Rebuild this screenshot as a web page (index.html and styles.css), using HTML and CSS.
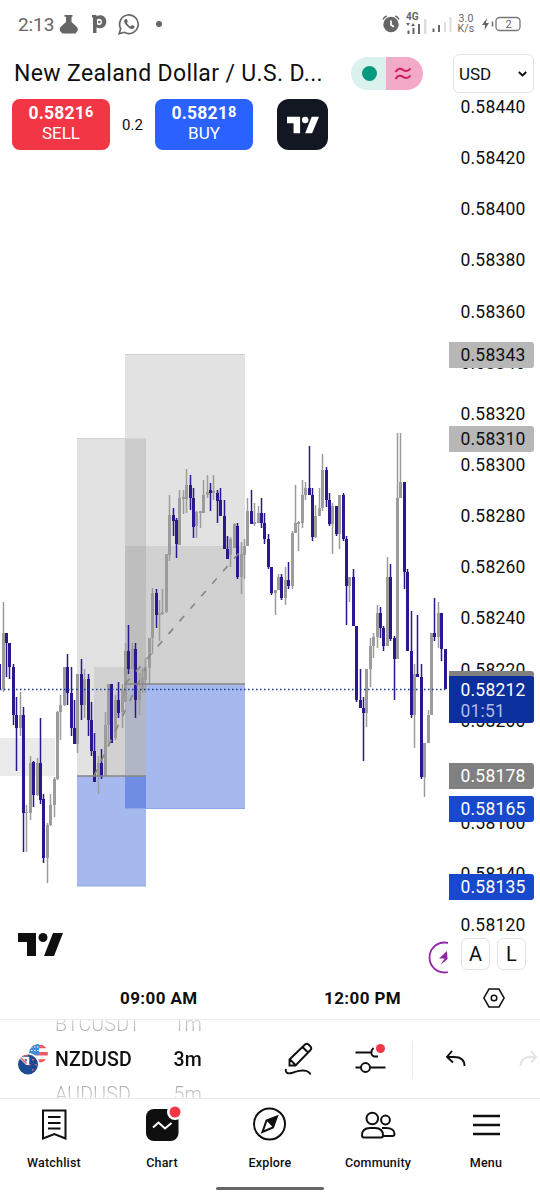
FILE: index.html
```html
<!DOCTYPE html>
<html lang="en">
<head>
    <meta charset="UTF-8">
    <meta name="viewport" content="width=device-width, initial-scale=1.0">
    <title>NZDUSD Chart</title>
    <link rel="stylesheet" href="styles.css">
</head>
<body>
    <!-- Phone status bar -->
    <div class="status-bar">
        <span class="clock">2:13</span>
        <svg class="flask" width="20" height="20" viewBox="0 0 20 20"><path d="M5.500 1h8v1.800h-1V8l5.500 5q1.500 2 .5 4l-2 2.500H3.500L1 17q-1-2 .5-4L7 8V2.800H5.500z" fill="#666"/></svg>
        <svg class="p-icon" width="15" height="20" viewBox="0 0 15 20"><path fill-rule="evenodd" d="M0 1h4.500v1.200c5-2.500 10 .3 9.800 5.800-.3 5-4.500 7.500-9.800 5.500V19H1V3.500H0zM5 5.500v5c2.500 1.500 5 .2 5-2.500s-2.500-4-5-2.500z" fill="#666"/><circle cx="7.300" cy="8" r="1.300" fill="#666"/></svg>
        <svg class="whatsapp" width="22" height="22" viewBox="0 0 22 22"><path d="M1.200 20.800l1.500-5.200a9.300 9.300 0 1 1 3.600 3.700z" fill="none" stroke="#666" stroke-width="1.700"/><path d="M7.500 6c-2 1-1.500 3.500.5 6s5 4.500 7 3.800c1.500-.6 1.800-2 1.500-2.500l-2.500-1.300-1.400 1.400c-1.600-.6-3-2-3.700-3.500l1-1.300L8.800 6z" fill="#666"/></svg>
        <span class="more-dot"></span>
        <span class="spacer"></span>
        <svg class="alarm" width="18" height="18" viewBox="0 0 18 18"><circle cx="9" cy="9.500" r="7.700" fill="#666"/><path d="M1 4.500Q2 2 4.800 1M17 4.500Q16 2 13.200 1" stroke="#666" stroke-width="1.500" fill="none"/><path d="M9 5.500V10l3 1.800" stroke="#fff" stroke-width="1.700" fill="none"/></svg>
        <div class="network">
            <span>4G</span>
            <svg width="21" height="16" viewBox="0 0 21 16"><path d="M0 5h4l-2 3zM5 8h4L7 5z" fill="#666"/><path d="M1.500 12.500h2V16h-2zM6.500 10h2v6h-2zM12 6h2v10h-2z" fill="#666"/><path d="M18 1h2.500v15H18z" fill="#ddd"/></svg>
        </div>
        <svg class="signal" width="20" height="16" viewBox="0 0 20 16"><path d="M.5 12.500h2V16h-2zM6 9h2v7H6z" fill="#666"/><path d="M12 6h2v10h-2zM17.500 1h2v15h-2z" fill="#ddd"/></svg>
        <div class="speed">3.0<br>K/s</div>
        <svg class="battery" width="40" height="16" viewBox="0 0 40 16"><path d="M5 2L0 9h3l-.5 5L7 7H4z" fill="#666"/><path d="M10.500 5.500v5" stroke="#777" stroke-width="1.600"/><rect x="14" y="1.500" width="24" height="13" rx="3.500" fill="none" stroke="#777" stroke-width="1.300"/><text x="26.500" y="12" class="battery-text">2</text></svg>
    </div>

    <div class="chart">
        <div class="pane">
            <div class="header">
                <h1>New Zealand Dollar / U.S. D...</h1>
                <div class="market">
                    <div class="open"><i></i></div>
                    <div class="delayed">
                        <svg width="18" height="14" viewBox="0 0 18 14"><path d="M1.500 5C4 .5 7 1.500 9 2.800s5 2 7.500-1.300M1.500 12C4 7.500 7 8.500 9 9.800s5 2 7.500-1.300" fill="none" stroke="#cf1c5f" stroke-width="2"/></svg>
                    </div>
                </div>
            </div>
            <div class="trade">
                <button class="sell"><b>0.5821<small>6</small></b>SELL</button>
                <span class="spread">0.2</span>
                <button class="buy"><b>0.5821<small>8</small></b>BUY</button>
                <div class="broker">
                    <svg width="32" height="18" viewBox="0 0 44 23"><path d="M0 0h18v23H9V9H0z"/><circle cx="25" cy="4.500" r="4.500"/><path d="M34 0h10l-9.500 23H25z"/></svg>
                </div>
            </div>
            <svg id="candles" class="candles" width="448" height="824" viewBox="0 152 448 824">
                <!-- closed trade on the left edge -->
                <rect class="zone-old" x="0" y="738" width="55" height="38"/>
                <!-- later position -->
                <rect class="zone-grey" x="125" y="354" width="120" height="330"/>
                <rect class="zone-mid" x="125" y="546" width="120" height="138"/>
                <rect class="zone-blue" x="125" y="684" width="120" height="125"/>
                <!-- earlier position -->
                <rect class="zone-grey" x="77" y="438" width="69" height="338"/>
                <rect class="zone-mid" x="94" y="667" width="52" height="109"/>
                <rect class="zone-blue" x="77" y="776" width="69" height="110"/>
                <rect class="zone-both" x="125" y="684" width="21" height="92"/>
                <path class="edge-grey" d="M125 354.500h120M77 438.500h69"/>
                <path class="edge-blue" d="M125 808.500h120M77 886h69"/>
                <g id="bars"></g>
                <path class="entry" d="M125 684h120M77 776h69"/>
                <path class="trend" d="M94 776L146 667M125 684L245 546"/>
                <path class="last-price" d="M0 689.500h448"/>
                <g transform="translate(18 933)" fill="#0f0f0f"><path d="M0 0h18v23H9V9H0z"/><circle cx="25" cy="4.500" r="4.500"/><path d="M35 0h10l-9 23H26z"/></g>
                <g class="flash"><circle cx="444.500" cy="957.500" r="15"/><path d="M447 951l-8 7.500h5.500l-4 6.500 7-6z"/></g>
            </svg>
        </div>

        <div class="scale">
            <div class="currency">USD
                <svg width="9" height="6" viewBox="0 0 9 6"><path d="M.8 1l3.700 3.500L8.200 1" fill="none" stroke="#0f0f0f" stroke-width="1.800"/></svg>
            </div>
            <div class="ticks">
                <span>0.58440</span>
                <span>0.58420</span>
                <span>0.58400</span>
                <span>0.58380</span>
                <span>0.58360</span>
                <span>0.58340</span>
                <span>0.58320</span>
                <span>0.58300</span>
                <span>0.58280</span>
                <span>0.58260</span>
                <span>0.58240</span>
                <span>0.58220</span>
                <span>0.58200</span>
                <span class="covered"></span>
                <span>0.58160</span>
                <span>0.58140</span>
                <span>0.58120</span>
            </div>
            <div class="tag tag-target-2">0.58343</div>
            <div class="tag tag-target-1">0.58310</div>
            <div class="tag tag-entry-2"></div>
            <div class="tag tag-last">0.58212<br><em>01:51</em></div>
            <div class="tag tag-entry-1">0.58178</div>
            <div class="tag tag-stop-2">0.58165</div>
            <div class="tag tag-stop-1">0.58135</div>
            <div class="modes"><span>A</span><span>L</span></div>
        </div>
    </div>

    <div class="time-axis">
        <span class="t1">09:00 AM</span>
        <span class="t2">12:00 PM</span>
        <svg width="22" height="20" viewBox="0 0 22 20"><path d="M6 1h10l5.200 9L16 19H6L.8 10z" fill="none" stroke="#0f0f0f" stroke-width="1.500"/><circle cx="11" cy="10" r="2.800" fill="none" stroke="#0f0f0f" stroke-width="1.500"/></svg>
    </div>

    <div class="toolbar">
        <svg class="flags" width="30" height="31" viewBox="0 0 30 31">
            <defs>
                <clipPath id="us"><circle cx="20.500" cy="9.500" r="9.500"/></clipPath>
                <clipPath id="nz"><circle cx="10" cy="20.500" r="10"/></clipPath>
            </defs>
            <g clip-path="url(#us)">
                <path d="M10 0h20v20H10z" fill="#fff"/>
                <path d="M10 2.500h20M10 9.800h20M10 17h20" stroke="#ef5b67" stroke-width="3.500"/>
                <path d="M10 0h11v11H10z" fill="#3e8be0"/>
                <path d="M10 3h11M10 6.500h11" stroke="#fff" stroke-width="1" stroke-dasharray="1.500 1.500"/>
            </g>
            <circle cx="10" cy="20.500" r="11.500" fill="#fff"/>
            <g clip-path="url(#nz)">
                <path d="M0 10h20v21H0z" fill="#1d4a94"/>
                <path d="M2 14h8v7M9 20L3 14" stroke="#fff" stroke-width="2.500" fill="none"/>
                <path d="M0 11.500h10M8.500 19.500L3 14" stroke="#e6596a" stroke-width="1.500"/>
                <path d="M14 15h1.500v1.500H14zM11 20h1.500v1.500H11zM17 20h1.500v1.500H17zM14 25h1.500v1.500H14z" fill="#ee6b78"/>
            </g>
        </svg>
        <div class="wheel symbols">
            <span>BTCUSDT</span>
            <b>NZDUSD</b>
            <span>AUDUSD</span>
        </div>
        <div class="wheel intervals">
            <span>1m</span>
            <b>3m</b>
            <span>5m</span>
        </div>
        <svg class="tool draw" width="30" height="35" viewBox="0 0 30 35"><path d="M5.500 17.500L21 2.500q1.800-1.500 3.500 0l2 2q1.500 1.700 0 3.500L11.500 23.500H5.500zM18.500 5l5.500 5.500M6 17.500l5.500 5.500M2 27c-1 4 2 5 5.500 4 4-1 7.500-3 12-2.500 4 .3 6 1.500 7 4"/></svg>
        <svg class="tool settings" width="34" height="34" viewBox="0 0 34 34"><path d="M1.500 11.500H17M19.500 7c-3.500 3-2.500 7.500.5 8.500h4M1.500 26.500h6M16 26.500h15.500"/><circle cx="11.500" cy="26.500" r="4.500"/><circle cx="26.500" cy="7.500" r="4.500" class="dot"/></svg>
        <span class="divider"></span>
        <svg class="tool undo" width="22" height="18" viewBox="0 0 22 18"><path d="M7 1L2 7l6 5.500M2 7h7c7 0 10.500 3 10.500 9"/></svg>
        <svg class="tool redo" width="22" height="18" viewBox="0 0 22 18"><path d="M13 1l5 6-5 5.500M18 7h-5C6 7 2.500 10 2.500 16"/></svg>
    </div>

    <div class="nav">
        <a>
            <svg width="36" height="36" viewBox="0 0 36 36"><path d="M7 3.500h22.500v28L18.300 27 7 31.500zM12 10h12.500M12 16h12.500M12 21.500h12.500"/></svg>
            Watchlist
        </a>
        <a>
            <svg width="36" height="36" viewBox="0 0 36 36"><rect x="2" y="2" width="32.500" height="32" rx="8" class="solid"/><path d="M9 20.500l5.500-5 6.500 6 6.500-5.500" class="light"/><circle cx="31" cy="5" r="8" class="ring"/><circle cx="31" cy="5" r="5.500" class="dot"/></svg>
            Chart
        </a>
        <a>
            <svg width="36" height="36" viewBox="0 0 36 36"><circle cx="17.500" cy="17" r="15.500"/><path d="M25 9.500l-4 11-10.500 4.500 4-11.500z"/><path d="M25 9.500l-4 11-6.500-7z" class="solid"/></svg>
            Explore
        </a>
        <a>
            <svg width="36" height="36" viewBox="0 0 36 36"><circle cx="12.300" cy="11.500" r="5.800"/><circle cx="25.500" cy="13" r="4.400"/><path d="M4 30.500q-2 0-2-2c0-5 3-7.500 8-7.500h5c5 0 8 2.500 8 7.500q0 2-2 2zM22 21h4c6 0 8.500 3 8.500 6q0 2-2 2h-9.500"/></svg>
            Community
        </a>
        <a>
            <svg width="36" height="36" viewBox="0 0 36 36"><path d="M5 9h27M5 18h27M5 27h27" class="thick"/></svg>
            Menu
        </a>
    </div>
    <div class="home-bar"></div>

    <script src="chart.js"></script>
</body>
</html>
```

FILE: styles.css
```css
body {
    margin: 0;
    width: 540px;
    height: 1200px;
    overflow: hidden;
    background: #fff;
    color: #0f0f0f;
    font-family: Roboto, sans-serif;
    display: flex;
    flex-direction: column;
}

svg {
    display: block;
    flex: none;
}

/* Status bar */
.status-bar {
    height: 48px;
    display: flex;
    align-items: center;
    color: #666;
    padding: 0 19px 0 18px;
    box-sizing: border-box;
    flex: none;
}

.clock {
    font-size: 19px;
    letter-spacing: -0.1px;
    width: 41px;
}

.p-icon {
    margin-left: 13px;
}

.whatsapp {
    margin-left: 11px;
}

.more-dot {
    width: 6px;
    height: 6px;
    border-radius: 50%;
    background: #666;
    margin-left: 16px;
}

.spacer {
    flex: 1;
}

.network {
    margin-left: 6px;
    width: 21px;
    height: 21px;
    font-size: 10px;
    font-weight: bold;
    line-height: 8px;
    display: grid;
}

.network span,
.network svg {
    grid-area: 1 / 1;
}

.network span {
    margin-top: -1px;
}

.network svg {
    margin-top: 4px;
}

.signal {
    margin-left: 5px;
}

.speed {
    font-size: 10.500px;
    line-height: 10px;
    letter-spacing: 0.2px;
    width: 20px;
    margin-left: 4px;
    text-align: center;
}

.battery {
    margin: 0 -1px 0 6px;
}

.battery-text {
    font-size: 11px;
    fill: #666;
    text-anchor: middle;
}

/* Chart */
.chart {
    display: flex;
    height: 928px;
    flex: none;
}

.pane {
    width: 448px;
    flex: none;
}

.header {
    display: flex;
    align-items: center;
    height: 51px;
    padding-left: 14px;
}

.header h1 {
    font-size: 23px;
    font-weight: normal;
    letter-spacing: 0.35px;
    line-height: 28px;
    padding-top: 1px;
    margin: 0;
    width: 337px;
    white-space: nowrap;
}

.market {
    display: flex;
    width: 72px;
    height: 33px;
    border-radius: 17px;
    overflow: hidden;
}

.open,
.delayed {
    flex: 1;
    display: flex;
    align-items: center;
    justify-content: center;
}

.open {
    background: #daf1ed;
}

.open i {
    width: 15px;
    height: 15px;
    border-radius: 50%;
    background: #089981;
    margin-left: 3px;
}

.delayed {
    background: #f3aac8;
    padding-right: 3px;
}

.trade {
    display: flex;
    align-items: center;
    padding-left: 12px;
    height: 51px;
    margin-bottom: 2px;
}

.trade button {
    width: 98px;
    height: 51px;
    border: 0;
    border-radius: 8px;
    padding: 0 0 3px;
    color: #fff;
    font: 17px/20px Roboto, sans-serif;
}

.trade b {
    display: block;
    font-size: 17.500px;
    letter-spacing: 0.2px;
}

.trade small {
    font-size: 14.500px;
    line-height: 0;
    vertical-align: 2px;
}

.sell {
    background: #f23645;
}

.trade .buy {
    background: #2962ff;
}

.spread {
    width: 45px;
    text-align: center;
    font-size: 15px;
}

.broker {
    width: 51px;
    height: 51px;
    margin-left: 24px;
    border-radius: 12px;
    background: #131722;
    display: flex;
    align-items: center;
    justify-content: center;
    fill: #fff;
}

.zone-old {
    fill: #ebebeb;
}

.zone-grey {
    fill: rgba(125, 125, 125, 0.22);
}

.zone-mid {
    fill: rgba(125, 125, 125, 0.16);
}

.zone-blue {
    fill: rgba(25, 75, 210, 0.39);
}

.zone-both {
    fill: #b0b6c6;
}

.edge-grey {
    stroke: #d3d3d3;
}

.edge-blue {
    stroke: #8fa6e6;
}

.entry {
    stroke: #868686;
    stroke-width: 1.3;
}

.trend {
    stroke: #868686;
    stroke-width: 1.6;
    stroke-dasharray: 7 9.600;
}

.last-price {
    stroke: #1a3a8f;
    stroke-width: 1.3;
    stroke-dasharray: 1.500 2.500;
}

.up {
    fill: #9c9c9c;
}

.down {
    fill: #2d178f;
}

.flash {
    fill: #9026a5;
}

.flash circle {
    fill: none;
    stroke: #9026a5;
    stroke-width: 1.800;
}

/* Price scale */
.scale {
    width: 92px;
    position: relative;
    font-size: 17.500px;
    letter-spacing: 0.2px;
}

.currency {
    box-sizing: border-box;
    width: 81px;
    height: 39px;
    margin: 6px 0 0 5px;
    padding: 0 6px 0 5px;
    border: 1.500px solid #e4e4e4;
    border-radius: 6px;
    display: flex;
    align-items: center;
    justify-content: space-between;
    font-size: 17px;
    letter-spacing: 0;
}

.ticks {
    margin-top: -11px;
    padding-left: 12.500px;
}

.ticks span {
    display: block;
    height: 51.150px;
    line-height: 51.150px;
}

.tag {
    position: absolute;
    left: 0.500px;
    box-sizing: border-box;
    width: 85px;
    height: 26px;
    line-height: 27px;
    padding-left: 12px;
    border-radius: 0 3px 3px 0;
    color: #fff;
}

.tag-target-2,
.tag-target-1 {
    background: #b7b7b7;
    color: #0f0f0f;
}

.tag-target-2 { top: 294px; }
.tag-target-1 { top: 378px; }

.tag-entry-2,
.tag-entry-1 {
    background: #808080;
}

.tag-entry-2 { top: 623px; }
.tag-entry-1 { top: 715px; }

.tag-last {
    top: 628px;
    height: 47px;
    padding-top: 4px;
    line-height: 21px;
    background: #0b2f9c;
}

.tag-last em {
    font-style: normal;
    color: #aebce8;
}

.tag-stop-2,
.tag-stop-1 {
    background: #1848cc;
}

.tag-stop-2 { top: 748px; }
.tag-stop-1 { top: 826px; }

.modes {
    display: flex;
    gap: 7px;
    padding-left: 13px;
    margin-top: -13.500px;
    position: relative;
}

.modes span {
    box-sizing: border-box;
    width: 29px;
    height: 32px;
    line-height: 30px;
    text-align: center;
    background: #fff;
    border: 1px solid #e2e2e2;
    border-radius: 6px;
    font-size: 20px;
}

/* Time axis */
.time-axis {
    height: 43px;
    flex: none;
    display: flex;
    align-items: center;
    font-size: 17px;
    font-weight: bold;
    letter-spacing: 0.4px;
}

.time-axis span {
    padding-top: 1px;
}

.t1 {
    margin-left: 120px;
    width: 204px;
}

.t2 {
    width: 159px;
}

/* Toolbar */
.toolbar {
    height: 80px;
    flex: none;
    box-sizing: border-box;
    border-top: 1.500px solid #ebebeb;
    border-bottom: 1.500px solid #ebebeb;
    display: flex;
    align-items: center;
    padding-left: 18px;
    overflow: hidden;
}

.wheel {
    height: 78px;
    display: flex;
    flex-direction: column;
    justify-content: center;
    overflow: hidden;
    -webkit-mask-image: linear-gradient(rgba(0, 0, 0, 0.3), #000 35%, #000 65%, rgba(0, 0, 0, 0.3));
    mask-image: linear-gradient(rgba(0, 0, 0, 0.3), #000 35%, #000 65%, rgba(0, 0, 0, 0.3));
}

.wheel span,
.wheel b {
    flex: none;
    height: 35px;
    line-height: 35px;
    font-size: 19.500px;
    font-weight: 500;
    letter-spacing: 0.2px;
}

.wheel span {
    color: #777;
    font-weight: 300;
}

.symbols {
    margin-left: 7px;
    width: 119px;
}

.tool {
    fill: none;
    stroke: #0f0f0f;
    stroke-width: 1.900;
}

.dot {
    fill: #f23645;
    stroke: none;
}

.intervals {
    width: 111px;
}

.settings {
    margin-left: 40px;
    margin-top: -3px;
}

.divider {
    width: 1px;
    height: 37px;
    background: #ebebeb;
    margin-left: 24px;
}

.undo {
    margin-left: 32px;
}

.redo {
    margin-left: 51px;
    stroke: #e3e3e3;
}

/* Bottom navigation */
.nav {
    display: flex;
    height: 87px;
    flex: none;
}

.nav a {
    width: 108px;
    display: flex;
    flex-direction: column;
    align-items: center;
    padding-top: 8px;
    gap: 11.500px;
    font-size: 12.500px;
    font-weight: 500;
    line-height: 15px;
    letter-spacing: 0.2px;
}

.nav svg {
    overflow: visible;
    fill: none;
    stroke: #0f0f0f;
    stroke-width: 2;
}

.nav .solid {
    fill: #0f0f0f;
    stroke: none;
}

.nav .light {
    stroke: #fff;
}

.nav .ring {
    fill: #fff;
    stroke: none;
}

.nav .dot {
    fill: #f23645;
    stroke: none;
}

.nav .thick {
    stroke-width: 2.600;
}

.home-bar {
    width: 108px;
    height: 3px;
    border-radius: 2px;
    background: #666;
    margin: 1px auto 0;
}
```

FILE: chart.js
```js
// One bar per 3 minutes: direction, high, body top, body bottom, low
const bars = [
    ['d',664,664,689,689],
    ['u',602,633,689,692], ['d',633,633,643,677], ['d',643,643,667,679], ['d',664,667,715,725],
    ['d',697,715,728,771], ['u',692,715,728,736], ['d',707,715,813,852], ['u',805,812,813,852],
    ['u',756,763,813,820], ['d',761,762,795,807], ['u',758,763,795,796], ['d',718,763,800,804],
    ['d',794,799,858,863], ['u',823,825,858,883], ['u',794,805,825,826], ['u',777,779,805,817],
    ['u',711,712,779,780], ['u',695,705,712,740], ['u',667,667,705,706], ['d',654,667,693,705],
    ['d',667,693,728,736], ['d',700,728,744,744], ['u',674,674,744,753], ['d',659,674,705,720],
    ['u',669,679,705,718], ['d',674,679,720,736], ['d',702,720,751,756], ['d',733,751,782,782],
    ['u',756,763,776,794], ['d',749,763,776,779], ['u',712,725,776,776], ['u',684,684,725,747],
    ['d',684,684,743,743], ['u',695,700,738,740], ['d',682,700,713,718], ['u',684,690,712,728],
    ['u',643,651,702,702], ['d',625,651,669,674], ['u',643,649,669,669], ['d',643,649,700,718],
    ['u',673,690,700,715], ['u',669,677,690,693], ['u',658,669,680,693], ['u',638,638,668,685],
    ['u',588,593,638,654], ['d',589,593,615,628], ['u',600,613,615,641], ['u',589,612,614,615],
    ['u',554,554,612,613], ['u',495,515,555,561], ['d',508,515,521,536], ['d',518,520,544,558],
    ['u',490,498,545,545], ['u',490,497,499,514], ['u',469,485,499,513], ['d',475,485,498,510],
    ['d',488,498,527,538], ['u',511,512,526,538], ['u',511,511,513,528], ['u',480,495,513,513],
    ['u',475,492,495,498], ['d',483,490,493,511], ['u',475,491,493,500], ['d',490,493,501,523],
    ['d',488,500,516,516], ['d',500,516,549,549], ['d',536,549,559,559], ['u',537,539,555,567],
    ['u',523,524,548,548], ['d',523,526,577,579], ['u',542,554,577,594], ['u',539,546,555,579],
    ['u',498,511,546,546], ['d',490,511,524,524], ['u',503,522,524,526], ['u',506,513,523,523],
    ['d',498,513,523,528], ['d',513,523,539,544], ['d',534,539,567,569], ['d',567,567,593,595],
    ['u',590,590,593,615], ['u',574,577,590,590], ['d',574,577,598,600], ['u',567,580,598,605],
    ['d',562,580,586,589], ['u',531,533,586,589], ['u',485,523,533,533], ['u',521,522,524,551],
    ['u',480,495,523,528], ['u',482,488,495,500], ['d',446,488,495,495], ['d',488,495,537,541],
    ['u',505,516,537,538], ['u',488,508,516,516], ['u',454,470,508,511], ['d',467,470,500,507],
    ['d',493,500,524,526], ['u',503,506,524,554], ['d',506,506,534,536], ['u',495,495,534,549],
    ['d',493,495,539,541], ['d',536,539,586,625], ['u',577,577,586,602], ['d',569,577,626,626],
    ['d',626,626,700,702], ['d',669,700,708,708], ['d',697,708,713,761], ['u',669,669,713,727],
    ['u',638,646,669,687], ['u',633,637,646,658], ['u',605,613,637,648], ['d',607,613,628,638],
    ['d',626,628,646,651], ['u',557,577,646,646], ['d',564,577,639,641], ['d',636,638,659,700],
    ['u',433,498,659,659], ['u',433,482,498,498], ['d',482,482,572,589], ['d',569,572,651,651],
    ['d',611,651,715,718], ['u',664,674,715,748], ['d',615,674,677,677], ['d',664,677,777,779],
    ['u',743,743,777,797], ['u',710,715,743,743], ['u',633,633,715,715], ['d',598,633,637,641],
    ['u',602,613,637,648], ['d',613,613,649,661], ['d',649,649,689,689]
];

const group = document.getElementById('bars');

function addRect(cls, x, y, width, height) {
    const rect = document.createElementNS('http://www.w3.org/2000/svg', 'rect');
    rect.setAttribute('class', cls);
    rect.setAttribute('x', x);
    rect.setAttribute('y', y);
    rect.setAttribute('width', width);
    rect.setAttribute('height', height);
    group.appendChild(rect);
}

bars.forEach(([dir, high, top, bottom, low], i) => {
    const cls = dir === 'u' ? 'up' : 'down';
    const x = Math.floor(3 + (i - 1) * 3.4);
    addRect(cls, x - 0.25, high, 1.5, low - high);
    addRect(cls, x - 1, top, 3, Math.max(bottom - top, 1));
});
```
